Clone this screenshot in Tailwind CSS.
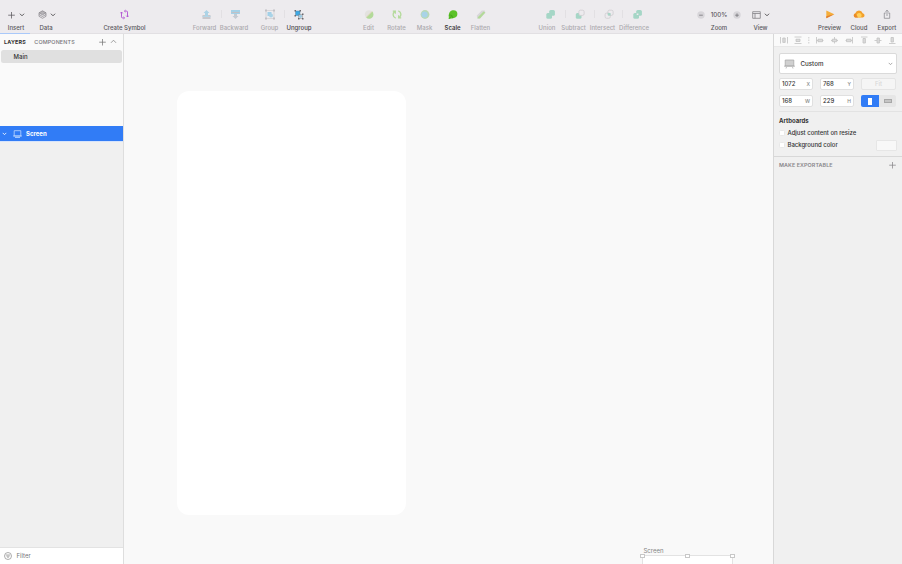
<!DOCTYPE html>
<html lang="en">
<head>
<meta charset="utf-8">
<title>Screen</title>
<script src="https://cdn.jsdelivr.net/npm/@tailwindcss/browser@4"></script>
</head>
<body class="w-[902px] h-[564px] overflow-hidden flex flex-col bg-[#f9f9f9] font-['Inter',sans-serif] text-[6.2px] leading-[8px] text-[#333]">
<svg class="hidden">
  <symbol id="chev" viewBox="0 0 6 4"><path d="M1.200 1 3 2.800 4.800 1" fill="none" stroke="currentColor" stroke-width="1" stroke-linecap="round" stroke-linejoin="round"/></symbol>
  <symbol id="plus" viewBox="0 0 8 8"><path d="M4.500 1v6.500M1.200 4.200h6.600" fill="none" stroke="currentColor" stroke-width=".75"/></symbol>
</svg>
<header class="h-[34px] shrink-0 flex bg-[#edebee] border-b border-[#e2e0e3] whitespace-nowrap text-[#59575b] text-[6px] font-medium [&>div]:flex [&>div]:flex-col [&>div]:items-center [&>div]:shrink-0 [&>div]:pt-[9px] [&>div>span]:mt-[4px] [&>i]:w-px [&>i]:h-[8px] [&>i]:mt-[10px] [&>i]:bg-[#e2e0e3] [&>i]:shrink-0">
  <div class="w-[32px]"><div class="h-[11px] flex items-center gap-[4px]"><svg class="size-[8px]"><use href="#plus"/></svg><svg class="w-[6px] h-[4px]"><use href="#chev"/></svg></div><span>Insert</span></div>
  <div class="w-[28px]"><div class="h-[11px] flex items-center gap-[3px] pl-[1px]"><svg class="size-[9px]" viewBox="0 0 9 9" fill="#b5b3b7" stroke="#858388" stroke-width=".7"><path d="m1 2.800 3.500-2L8 2.800 4.500 4.800z"/><path fill="none" d="M1 2.800v3.500l3.500 2 3.500-2V2.800M1 4.500l3.500 2 3.500-2"/></svg><svg class="w-[6px] h-[4px]"><use href="#chev"/></svg></div><span>Data</span></div>
  <div class="w-[41px] ml-[44px]"><svg class="h-[11px] w-[9px]" viewBox="0 0 9 11" fill="none" stroke="#b04fd3" stroke-width=".9"><path d="M3.800 8.900H2.500a1 1 0 0 1-1-1V3.200M.3 4.300l1.200-1.300 1.200 1.300M5.200 2.100h1.300a1 1 0 0 1 1 1v4.700M6.300 6.700l1.200 1.300 1.200-1.300M4.300 2.100l1.300-1M4.300 2.100l1.300 1M4.700 8.900l-1.300-1M4.700 8.900l-1.300 1"/></svg><span>Create Symbol</span></div>
  <div class="w-[23px] ml-[48px] text-[#aba9ad]"><svg class="h-[11px] w-[10px] translate-x-[1.5px]" viewBox="0 0 10 11"><path d="M1 6h8v4H1z" fill="#c9c8cc"/><path d="M1 7h8v1H1z" fill="#b5d6e6"/><path d="m5 1 3 3H6.500v3h-3V4H2z" fill="#acd3e6"/></svg><span>Forward</span></div>
  <i class="ml-[5px] mr-[-2px]"></i>
  <div class="w-[28px] text-[#aba9ad]"><svg class="h-[11px] w-[10px] translate-x-[1.5px]" viewBox="0 0 10 11"><path d="M.5 1h9v4h-9z" fill="#a5d1e7"/><path d="M1 3h8v1H1z" fill="#c2c1c5"/><path d="M3.500 5h3v2H8l-3 3-3-3h1.500z" fill="#c5cbd2"/></svg><span>Backward</span></div>
  <div class="w-[17px] ml-[13px] text-[#aba9ad]"><svg class="h-[11px] w-[10px]" viewBox="0 0 10 11"><path d="M1 1.500h8v8H1z" fill="none" stroke="#c9c7cb" stroke-width=".6"/><path d="M2.500 3h4v4h-4z" fill="#a2d0e8"/><circle cx="6" cy="6.500" r="2" fill="#a9d3e7"/><path d="M0 .5h2v2H0zm8 0h2v2H8zm-8 8h2v2H0zm8 0h2v2H8z" fill="#c3c1c5"/></svg><span>Group</span></div>
  <i class="ml-[6px] mr-[2px]"></i>
  <div class="w-[24px] text-[#4a484c]"><svg class="h-[11px] w-[10px]" viewBox="0 0 10 11"><path d="M1.500 2h4.500v4.500H1.500z" fill="#3da8e3" stroke="#5f8da9" stroke-width=".5"/><circle cx="6.500" cy="7.300" r="1.700" fill="#9ecbe2"/><path d="M4.500 5.500h4v4h-4z" fill="none" stroke="#88868b" stroke-width=".5"/><path d="M.5 1h1.500v1.500H.5zM5.500 1h1.500v1.500H5.500zM.5 6H2v1.500H.5zM8 4.500h1.500V6H8zM4 9h1.500v1.500H4zm4 0h1.500v1.500H8z" fill="#69686d"/></svg><span>Ungroup</span></div>
  <div class="w-[28px] ml-[43.5px] text-[#aba9ad]"><svg class="h-[11px] w-[10px]" viewBox="0 0 10 11"><circle cx="5" cy="5.500" r="4.200" fill="#e3e2df"/><path d="M8.200 2.500A4.200 4.200 0 0 1 2.200 8.500z" fill="#b3da99"/><path d="m2.300 8.300 5.700-5.800" stroke="#dfd3b3" stroke-width=".8"/></svg><span>Edit</span></div>
  <div class="w-[28px] text-[#aba9ad]"><svg class="h-[11px] w-[10px]" viewBox="0 0 10 11" fill="none" stroke="#b3da99" stroke-width="1.300"><path d="M3.700 9.200C.4 8 .4 4.200 2.700 2.400M.8 2.200h2.500v2.500M6.300 1.800c3.300 1.200 3.300 5 1 6.800M9.200 8.800H6.700V6.300"/></svg><span>Rotate</span></div>
  <div class="w-[28px] text-[#aba9ad]"><svg class="h-[11px] w-[10px]" viewBox="0 0 10 11"><circle cx="5" cy="5.500" r="4.400" fill="#b9d9b4"/><circle cx="4.600" cy="5.500" r="3.100" fill="#a9d3e7"/></svg><span>Mask</span></div>
  <div class="w-[28px] text-[#3f3d41] font-semibold"><svg class="h-[11px] w-[10px]" viewBox="0 0 10 11"><path d="M.8 10V6.500C.8 3 3 1.200 5.500 1.200a3.900 3.900 0 0 1 3.900 3.900C9.400 7.700 7.500 9 4.800 9.200z" fill="#5cc229"/><path d="M1 9.700l3-3M.8 6.500C2 5.500 4.700 6 4.700 9.200" stroke="#3c9c17" stroke-width=".7" fill="none"/></svg><span>Scale</span></div>
  <div class="w-[28px] text-[#aba9ad]"><svg class="h-[11px] w-[10px]" viewBox="0 0 10 11"><path d="m.8 6.500 5-5h3L9.300 4 4 9.500H1.300z" fill="#d8d6d9"/><path d="m2 8 5.500-5.500 1.800 1L4 9.500H1.500z" fill="#b3da99"/></svg><span>Flatten</span></div>
  <div class="w-[17px] ml-[44px] text-[#aba9ad]"><svg class="h-[11px] w-[10px] translate-x-[3.5px]" viewBox="0 0 10 11" fill="#a5d6c6"><rect x="3.700" y="1" width="5.700" height="5.700" rx="1.500"/><rect x=".8" y="4" width="5.700" height="5.700" rx="1.500"/></svg><span>Union</span></div>
  <i class="ml-[9px] mr-[-4.5px]"></i>
  <div class="w-[25px] text-[#aba9ad]"><svg class="h-[11px] w-[10px] translate-x-[6px]" viewBox="0 0 10 11"><rect x=".8" y="4" width="5.700" height="5.700" rx="1.500" fill="#a5d6c6"/><rect x="3.900" y="1.200" width="5.200" height="5.200" rx="1.500" fill="#edebee" stroke="#cbc9cd" stroke-width=".7"/></svg><span>Subtract</span></div>
  <i class="ml-[8px] mr-[-5px]"></i>
  <div class="w-[25px] text-[#aba9ad]"><svg class="h-[11px] w-[10px] translate-x-[6px]" viewBox="0 0 10 11" fill="none" stroke="#cbc9cd" stroke-width=".7"><rect x="3.900" y="1.200" width="5.200" height="5.200" rx="1.500"/><rect x="1.100" y="4.100" width="5.200" height="5.200" rx="1.500"/><rect x="4.200" y="4.400" width="1.900" height="1.700" fill="#a5d6c6" stroke="#a5d6c6"/></svg><span>Intersect</span></div>
  <i class="ml-[7px] mr-[-4px]"></i>
  <div class="w-[30px] text-[#aba9ad]"><svg class="h-[11px] w-[10px] translate-x-[3.5px]" viewBox="0 0 10 11" fill="#a5d6c6"><rect x="3.700" y="1" width="5.700" height="5.700" rx="1.500"/><rect x=".8" y="4" width="5.700" height="5.700" rx="1.500"/><rect x="4.200" y="4.500" width="1.700" height="1.500" fill="#edebee"/></svg><span>Difference</span></div>
  <div class="w-[46px] ml-[47px]"><div class="h-[11px] w-[44px] flex items-center justify-between"><svg class="size-[8px]" viewBox="0 0 8 8"><circle cx="4" cy="4" r="3.700" fill="#d7d5d9"/><path d="M2.200 4.200h3.600" stroke="#757378" stroke-width=".8"/></svg><span class="text-[6.2px]">100%</span><svg class="size-[8px]" viewBox="0 0 8 8"><circle cx="4" cy="4" r="3.700" fill="#d7d5d9"/><path d="M2.200 4.200h3.600M4 2.400v3.600" stroke="#757378" stroke-width=".8"/></svg></div><span>Zoom</span></div>
  <div class="w-[21px] ml-[8px]"><div class="h-[11px] flex items-center gap-[3px]"><svg class="w-[9px] h-[8px]" viewBox="0 0 9 8" fill="none" stroke="#838186" stroke-width=".8"><path d="M.7.7h7.600v6.600H.7zM.7 2.500h7.600M3 2.500v4.800"/></svg><svg class="w-[6px] h-[4px]"><use href="#chev"/></svg></div><span>View</span></div>
  <div class="w-[22px] ml-[47.5px]"><svg class="h-[11px] w-[10px]" viewBox="0 0 10 11"><path d="M1.300 1.600 9.300 5.300l-8 3.900z" fill="#f5ae3b"/><path d="m1.300 7.200 8-1.900-8 3.900z" fill="#e17c30"/></svg><span>Preview</span></div>
  <div class="w-[17px] ml-[10px]"><svg class="h-[11px] w-[12px]" viewBox="0 0 12 11"><path d="M2.500 8.500a2.200 2.200 0 0 1-.2-4.300 3.900 3.900 0 0 1 7.400 0 2.200 2.200 0 0 1 .2 4.300z" fill="#f3a02b"/><path d="M3.800 7.300a2.500 2.500 0 1 1 4.700 0l-1 1.200H5z" fill="#ffd05a"/><path d="M2.500 8.500C.3 8 .5 5.200 2.500 4.700L5 8.500z" fill="#e9892b"/></svg><span>Cloud</span></div>
  <div class="w-[19px] ml-[10px]"><svg class="h-[11px] w-[8px]" viewBox="0 0 8 11" fill="none" stroke="#838186" stroke-width=".7"><path d="M2.800 4H1.300v5.300h5.400V4H5.200M4 7V1.200M2.500 2.700 4 1.200l1.500 1.500"/></svg><span>Export</span></div>
</header>

<main class="flex-1 min-h-0 flex">
  <aside class="w-[124px] shrink-0 flex flex-col bg-[#f0f0f0] border-r border-[#dedede]">
    <section class="h-[92px] bg-[#fafafa] relative">
      <div class="absolute left-0 -top-px h-px w-[30px] bg-[#a9c9fa]"></div>
      <div class="h-[16px] flex items-center pl-[4px] pr-[6px] text-[5.4px] tracking-[0.15px]"><span class="font-bold w-[30.300px]">LAYERS</span><span class="font-medium text-[#77757a]">COMPONENTS</span><svg class="size-[8px] ml-auto -mt-px text-[#777]"><use href="#plus"/></svg><svg class="w-[7px] h-[5px] ml-[4px] -mt-px rotate-180 text-[#888]" viewBox="0 0 7 5"><path d="M1 1.200 3.500 3.800 6 1.200" fill="none" stroke="currentColor" stroke-width=".8"/></svg></div>
      <div class="ml-[1px] mr-[1px] h-[13px] rounded-[2.5px] bg-[#e0e0e0] flex items-center pl-[12.500px] font-medium text-[6px]">Main</div>
    </section>
    <div class="h-[16px] bg-[#317cf6] border-b border-[#d6e4fc] text-white flex items-center font-bold text-[6px] pl-[2px] pt-[1px]"><svg class="w-[5px] h-[4px]"><use href="#chev"/></svg><svg class="w-[9px] h-[8px] ml-[6px] mr-[4px]" viewBox="0 0 9 8" fill="none" stroke="#bfd8ff" stroke-width=".8"><path d="M1.200.7h6.600v5.300H1.200zM0 6h9M2 7.500h5"/></svg>Screen</div>
    <div class="mt-auto h-[17px] bg-white border-t border-[#e3e3e3] flex items-center pl-[4px] text-[#77757a] text-[6px]"><svg class="size-[8px] mr-[4.5px]" viewBox="0 0 8 8" fill="none" stroke="#8a8a8a" stroke-width=".7"><circle cx="4" cy="4" r="3.500"/><path d="M1.800 3h4.400M2.500 4.200h3M3.300 5.400h1.400"/></svg>Filter</div>
  </aside>

  <div class="w-[649px] shrink-0 relative overflow-hidden bg-[#f9f9f9]">
    <div class="absolute left-[53px] top-[57px] w-[229px] h-[424px] rounded-[12px] bg-white"></div>
    <div class="absolute left-[519.5px] top-[513px] text-[6px] text-[#858585]">Screen</div>
    <div class="absolute left-[518px] top-[521px] w-[91px] h-[20px] border border-[#e3e3e3] bg-white"></div>
    <div class="absolute left-[516px] top-[520px] w-[95px] flex justify-between [&>b]:w-[5px] [&>b]:h-[4px] [&>b]:bg-white [&>b]:border [&>b]:border-[#c8c8c8]"><b></b><b></b><b></b></div>
  </div>

  <aside class="w-[129px] shrink-0 bg-[#f0f0f0] border-l border-[#d8d8d8] flex flex-col text-[6.2px] font-medium">
    <div class="h-[13px] bg-[#fafafa] border-b border-[#e8e8e8] shrink-0">
      <svg class="w-[128px] h-[12px]" viewBox="0 0 128 12" fill="#dcdcdc" stroke="#c2c2c2" stroke-width=".8"><path d="M6.500 3v6.500M13.500 3v6.500M20.500 3h7M20.500 9.500h7M42.500 3v6.500M49.500 6.500h-7M60.500 3v6.500M64 6.500h-7M78.500 3v6.500M71.500 6.500h7M87 3h6.500M100.500 6.500h7M115 9.500h6.500"/><path d="M34.800 3v1.500m0 1v1.500m0 1v1.500"/><path d="M8.800 4h2.400v4.400H8.800zM22 5.200h4v2.300h-4zM44 5.200h4.500v2.500H44zM58.300 5.200h4.400v2.500h-4.400zM72.500 5.200h4.500v2.500h-4.500zM89 4.500h2.400V9H89zM103 4h2.400v5H103zM117 3.500h2.400V8H117z"/></svg>
    </div>
    <div class="mx-[5px] mt-[6px] h-[21px] bg-white rounded-[2px] border border-[#dadada] flex items-center pl-[4px] pr-[3px] text-[6.2px]"><svg class="w-[11px] h-[10px] mr-[5.5px]" viewBox="0 0 11 10"><path d="M1.200 1h8.600v6H1.200z" fill="#d0d0d0" stroke="#a5a5a5" stroke-width=".7"/><path d="M0 7.200h11M2.500 8l-.5 1.500M8.500 8l.5 1.500" stroke="#a5a5a5" stroke-width=".7"/></svg>Custom<svg class="ml-auto w-[5px] h-[4px] text-[#999]"><use href="#chev"/></svg></div>
    <div class="mt-[4px] ml-[5px] grid grid-cols-[34px_34px_35px] gap-x-[7px] gap-y-[5px] text-[6px] [&>div]:h-[12px] [&>div]:rounded-[2px] [&>div]:flex [&>div]:items-center [&>div]:justify-between [&_em]:not-italic [&_em]:text-[5px] [&_em]:text-[#888]">
      <div class="bg-white border border-[#e0e0e0] px-[2px]">1072<em>X</em></div>
      <div class="bg-white border border-[#e0e0e0] px-[2px]">768<em>Y</em></div>
      <div class="bg-[#f5f5f5] border border-[#e4e4e4]"><span class="w-full text-center text-[#d8d8d8]">Fit</span></div>
      <div class="bg-white border border-[#e0e0e0] px-[2px]">168<em>W</em></div>
      <div class="bg-white border border-[#e0e0e0] px-[2px]">229<em>H</em></div>
      <div class="overflow-hidden bg-[#e6e6e6]"><span class="w-[18px] h-[12px] shrink-0 bg-[#317cf6] flex items-center justify-center"><span class="w-[4px] h-[7px] bg-white"></span></span><span class="w-[8px] h-[4px] mr-[4px] bg-[#c5c5c5] border border-[#a8a8a8]"></span></div>
    </div>
    <div class="mt-[4px] ml-[5px] h-px bg-[#e3e3e3] shrink-0"></div>
    <div class="mt-[5px] ml-[5px] font-bold text-[6px]">Artboards</div>
    <div class="mt-[2px] h-[11px] ml-[5px] flex items-center gap-[2.5px] text-[6px] tracking-[-0.03px]"><span class="size-[6px] rounded-[1.500px] bg-white border border-[#e8e8e8]"></span>Adjust content on resize</div>
    <div class="h-[14px] ml-[5px] mr-[5px] flex items-center gap-[2.5px] text-[6px] tracking-[-0.03px]"><span class="size-[6px] rounded-[1.500px] bg-white border border-[#e8e8e8]"></span>Background color<span class="ml-auto w-[21px] h-[11px] rounded-[1px] bg-[#f8f8f8] border border-[#e6e6e6]"></span></div>
    <div class="mt-[4px] border-t border-[#d8d8d8] h-[17px] flex items-center pl-[5px] pr-[6px] text-[5.4px] tracking-[0.08px] font-semibold text-[#88868a]">MAKE EXPORTABLE<svg class="ml-auto size-[8px]"><use href="#plus"/></svg></div>
  </aside>
</main>
</body>
</html>
